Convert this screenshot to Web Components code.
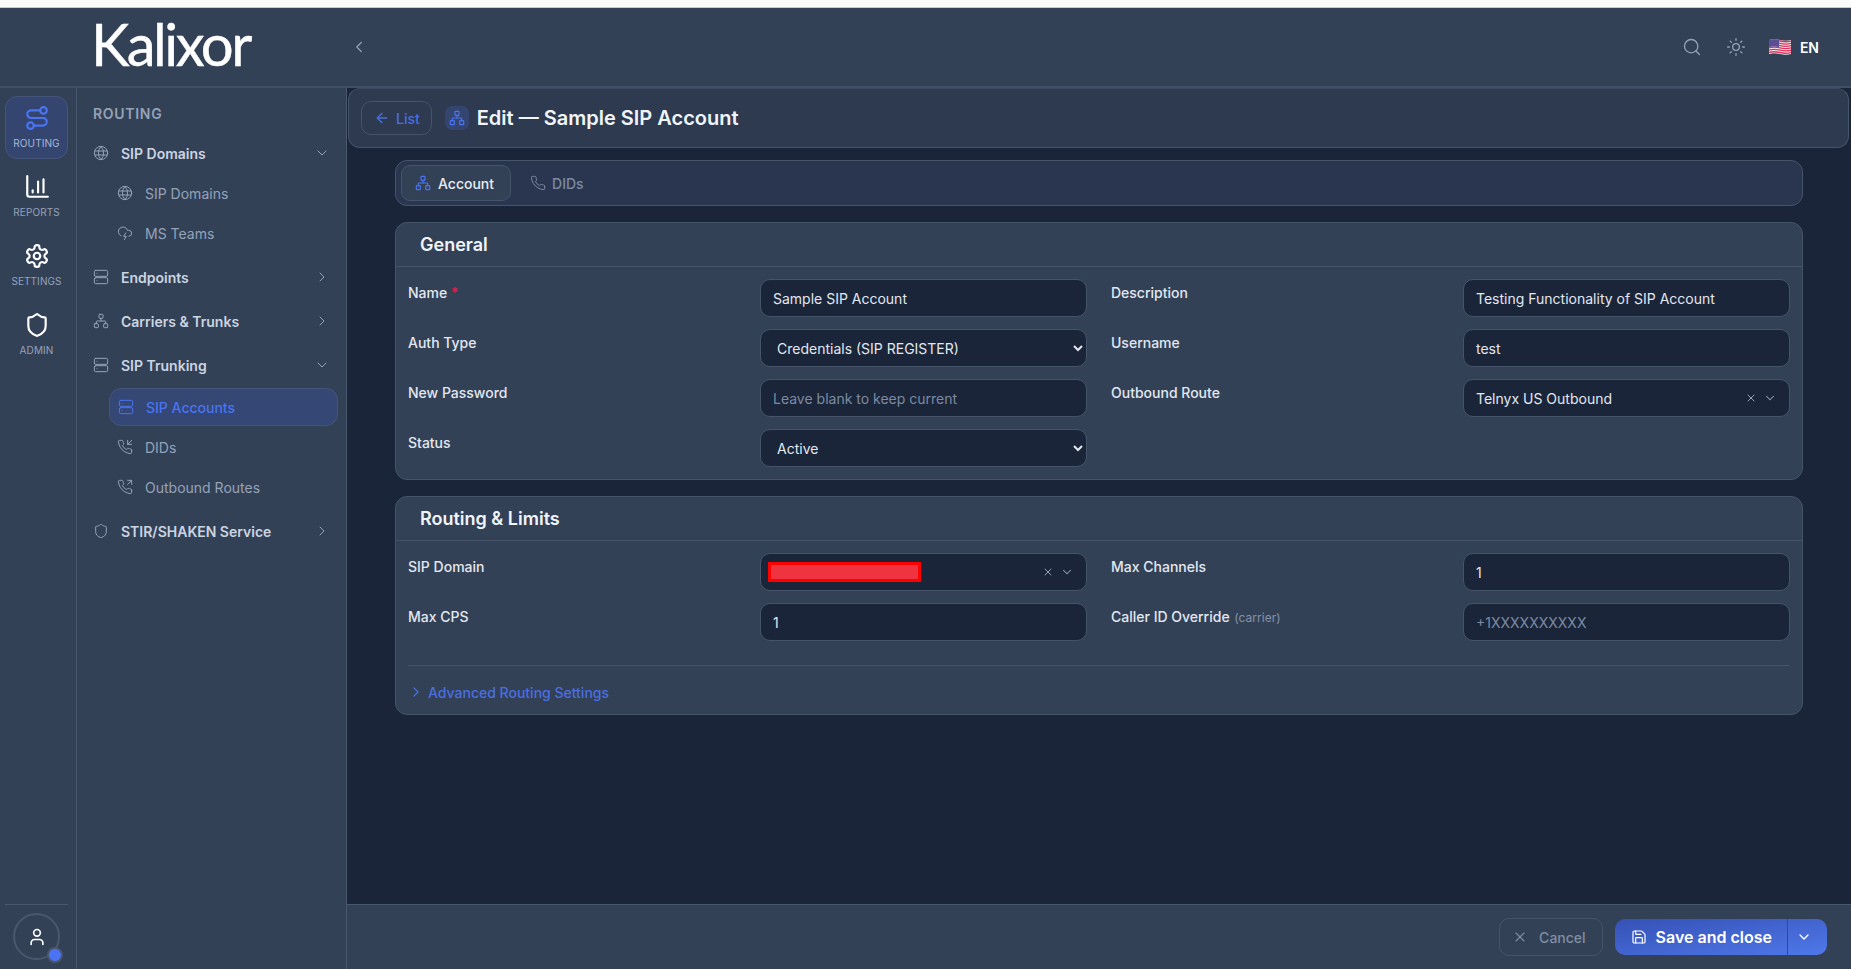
<!DOCTYPE html>
<html lang="en">
<head>
<meta charset="utf-8">
<title>Kalixor</title>
<style>
html,body{margin:0;height:100%;background:#1b2539;overflow:hidden}
body{font-family:Inter,"Liberation Sans",sans-serif;font-size:14px;color:#e2e8f0}
</style>
</head>
<body>
<kx-app>
  <kx-header slot="header"></kx-header>
  <kx-rail slot="rail">
    <kx-rail-item icon="route" active>ROUTING</kx-rail-item>
    <kx-rail-item icon="chart">REPORTS</kx-rail-item>
    <kx-rail-item icon="settings">SETTINGS</kx-rail-item>
    <kx-rail-item icon="shield">ADMIN</kx-rail-item>
  </kx-rail>
  <kx-nav slot="nav" heading="ROUTING">
    <kx-nav-item icon="globe" open>SIP Domains</kx-nav-item>
    <kx-nav-sub icon="globe" style="margin-top:-1px">SIP Domains</kx-nav-sub>
    <kx-nav-sub icon="cloud" style="margin-bottom:3px">MS Teams</kx-nav-sub>
    <kx-nav-item icon="server">Endpoints</kx-nav-item>
    <kx-nav-item icon="network">Carriers &amp; Trunks</kx-nav-item>
    <kx-nav-item icon="server" open>SIP Trunking</kx-nav-item>
    <kx-nav-sub icon="server" active style="margin-top:1px">SIP Accounts</kx-nav-sub>
    <kx-nav-sub icon="phonein">DIDs</kx-nav-sub>
    <kx-nav-sub icon="phoneout" style="margin-bottom:3px">Outbound Routes</kx-nav-sub>
    <kx-nav-item icon="shield">STIR/SHAKEN Service</kx-nav-item>
  </kx-nav>
  <kx-titlebar slot="title">Edit — Sample SIP Account</kx-titlebar>
  <kx-tabs slot="content"></kx-tabs>
  <kx-card slot="content" heading="General">
    <kx-field label="Name" required><kx-input>Sample SIP Account</kx-input></kx-field>
    <kx-field label="Description"><kx-input>Testing Functionality of SIP Account</kx-input></kx-field>
    <kx-field label="Auth Type"><kx-select>Credentials (SIP REGISTER)</kx-select></kx-field>
    <kx-field label="Username"><kx-input>test</kx-input></kx-field>
    <kx-field label="New Password"><kx-input placeholder>Leave blank to keep current</kx-input></kx-field>
    <kx-field label="Outbound Route"><kx-combo>Telnyx US Outbound</kx-combo></kx-field>
    <kx-field label="Status"><kx-select>Active</kx-select></kx-field>
  </kx-card>
  <kx-card slot="content" heading="Routing &amp; Limits" advanced>
    <kx-field label="SIP Domain"><kx-combo redacted></kx-combo></kx-field>
    <kx-field label="Max Channels"><kx-input>1</kx-input></kx-field>
    <kx-field label="Max CPS"><kx-input>1</kx-input></kx-field>
    <kx-field label="Caller ID Override" note="(carrier)"><kx-input placeholder>+1XXXXXXXXXX</kx-input></kx-field>
  </kx-card>
  <kx-footer slot="footer"></kx-footer>
</kx-app>

<script>
const ICONS = {
  route:'<circle cx="6" cy="19" r="3"/><path d="M9 19h8.5a3.5 3.5 0 0 0 0-7h-11a3.5 3.5 0 0 1 0-7H15"/><circle cx="18" cy="5" r="3"/>',
  chart:'<path d="M3 2v17a2 2 0 0 0 2 2h17"/><path d="M8 17v-2"/><path d="M13 17V7"/><path d="M18 17V5"/>',
  settings:'<path d="M12.22 2h-.44a2 2 0 0 0-2 2v.18a2 2 0 0 1-1 1.73l-.43.25a2 2 0 0 1-2 0l-.15-.08a2 2 0 0 0-2.73.73l-.22.38a2 2 0 0 0 .73 2.73l.15.1a2 2 0 0 1 1 1.72v.51a2 2 0 0 1-1 1.74l-.15.09a2 2 0 0 0-.73 2.73l.22.38a2 2 0 0 0 2.73.73l.15-.08a2 2 0 0 1 2 0l.43.25a2 2 0 0 1 1 1.73V20a2 2 0 0 0 2 2h.44a2 2 0 0 0 2-2v-.18a2 2 0 0 1 1-1.73l.43-.25a2 2 0 0 1 2 0l.15.08a2 2 0 0 0 2.73-.73l.22-.39a2 2 0 0 0-.73-2.73l-.15-.08a2 2 0 0 1-1-1.74v-.5a2 2 0 0 1 1-1.74l.15-.09a2 2 0 0 0 .73-2.73l-.22-.38a2 2 0 0 0-2.73-.73l-.15.08a2 2 0 0 1-2 0l-.43-.25a2 2 0 0 1-1-1.73V4a2 2 0 0 0-2-2z"/><circle cx="12" cy="12" r="3"/>',
  shield:'<path d="M20 13c0 5-3.5 7.5-7.66 8.95a1 1 0 0 1-.67-.01C7.5 20.5 4 18 4 13V6a1 1 0 0 1 1-1c2 0 4.5-1.2 6.24-2.72a1.17 1.17 0 0 1 1.52 0C14.51 3.81 17 5 19 5a1 1 0 0 1 1 1z"/>',
  globe:'<circle cx="12" cy="12" r="10"/><path d="M12 2a14.5 14.5 0 0 0 0 20 14.5 14.5 0 0 0 0-20"/><path d="M2.8 9h18.4"/><path d="M2.8 15h18.4"/>',
  cloud:'<path d="M6 16.326A7 7 0 1 1 15.71 8h1.79a4.5 4.5 0 0 1 .5 8.973"/><path d="m13 12-3 5h4l-3 5"/>',
  server:'<rect x="2" y="2" width="20" height="9" rx="2"/><rect x="2" y="13" width="20" height="9" rx="2"/><path d="M6 6.5h.01"/><path d="M6 17.5h.01"/>',
  network:'<rect x="16" y="16" width="6" height="6" rx="1"/><rect x="2" y="16" width="6" height="6" rx="1"/><rect x="9" y="2" width="6" height="6" rx="1"/><path d="M5 16v-3a1 1 0 0 1 1-1h12a1 1 0 0 1 1 1v3"/><path d="M12 12V8"/>',
  phone:'<path d="M22 16.92v3a2 2 0 0 1-2.18 2 19.79 19.79 0 0 1-8.63-3.07 19.5 19.5 0 0 1-6-6 19.79 19.79 0 0 1-3.07-8.67A2 2 0 0 1 4.11 2h3a2 2 0 0 1 2 1.72 12.84 12.84 0 0 0 .7 2.81 2 2 0 0 1-.45 2.11L8.09 9.91a16 16 0 0 0 6 6l1.27-1.27a2 2 0 0 1 2.11-.45 12.84 12.84 0 0 0 2.81.7A2 2 0 0 1 22 16.92z"/>',
  phonein:'<path d="M22 16.92v3a2 2 0 0 1-2.18 2 19.79 19.79 0 0 1-8.63-3.07 19.5 19.5 0 0 1-6-6 19.79 19.79 0 0 1-3.07-8.67A2 2 0 0 1 4.11 2h3a2 2 0 0 1 2 1.72 12.84 12.84 0 0 0 .7 2.81 2 2 0 0 1-.45 2.11L8.09 9.91a16 16 0 0 0 6 6l1.27-1.27a2 2 0 0 1 2.11-.45 12.84 12.84 0 0 0 2.81.7A2 2 0 0 1 22 16.92z"/><path d="M16 2v6h6"/><path d="m22 2-6 6"/>',
  phoneout:'<path d="M22 16.92v3a2 2 0 0 1-2.18 2 19.79 19.79 0 0 1-8.63-3.07 19.5 19.5 0 0 1-6-6 19.79 19.79 0 0 1-3.07-8.67A2 2 0 0 1 4.11 2h3a2 2 0 0 1 2 1.72 12.84 12.84 0 0 0 .7 2.81 2 2 0 0 1-.45 2.11L8.09 9.91a16 16 0 0 0 6 6l1.27-1.27a2 2 0 0 1 2.11-.45 12.84 12.84 0 0 0 2.81.7A2 2 0 0 1 22 16.92z"/><path d="M16 2h6v6"/><path d="m22 2-6 6"/>',
  search:'<circle cx="11" cy="11" r="8"/><path d="m21 21-4.3-4.3"/>',
  sun:'<circle cx="12" cy="12" r="4"/><path d="M12 2v2"/><path d="M12 20v2"/><path d="m4.93 4.93 1.41 1.41"/><path d="m17.66 17.66 1.41 1.41"/><path d="M2 12h2"/><path d="M20 12h2"/><path d="m6.34 17.66-1.41 1.41"/><path d="m19.07 4.93-1.41 1.41"/>',
  left:'<path d="m15 18-6-6 6-6"/>',
  right:'<path d="m9 18 6-6-6-6"/>',
  down:'<path d="m6 9 6 6 6-6"/>',
  back:'<path d="m12 19-7-7 7-7"/><path d="M19 12H5"/>',
  x:'<path d="M18 6 6 18"/><path d="m6 6 12 12"/>',
  user:'<path d="M19 21v-2a4 4 0 0 0-4-4H9a4 4 0 0 0-4 4v2"/><circle cx="12" cy="7" r="4"/>',
  save:'<path d="M15.2 3a2 2 0 0 1 1.4.6l3.8 3.8a2 2 0 0 1 .6 1.4V19a2 2 0 0 1-2 2H5a2 2 0 0 1-2-2V5a2 2 0 0 1 2-2z"/><path d="M17 21v-7a1 1 0 0 0-1-1H8a1 1 0 0 0-1 1v7"/><path d="M7 3v4a1 1 0 0 0 1 1h7"/>'
};
function el(name, html){
  customElements.define(name, class extends HTMLElement{
    constructor(){super();this.attachShadow({mode:'open'});}
    connectedCallback(){this.shadowRoot.innerHTML = html(this);}
  });
}
customElements.define('kx-icon', class extends HTMLElement{
  constructor(){super();this.attachShadow({mode:'open'});}
  connectedCallback(){
    const s=this.getAttribute('size')||16, w=this.getAttribute('stroke')||2;
    this.shadowRoot.innerHTML=`<style>:host{display:inline-flex;flex:none;width:${s}px;height:${s}px}svg{display:block}</style>
    <svg xmlns="http://www.w3.org/2000/svg" width="${s}" height="${s}" viewBox="0 0 24 24" fill="none" stroke="currentColor" stroke-width="${w}" stroke-linecap="round" stroke-linejoin="round">${ICONS[this.getAttribute('name')]}</svg>`;
  }
});

el('kx-app',()=>`<style>
:host{display:grid;height:100vh;grid-template-columns:77px 270px 1fr;grid-template-rows:8px 80px 1fr 65px;overflow:hidden;
  grid-template-areas:"strip strip strip" "head head head" "rail nav main" "rail nav foot"}
.strip{grid-area:strip;background:#fafafa;border-bottom:1px solid #c9c9c9;box-sizing:border-box}
.head{grid-area:head;display:grid}
.rail{grid-area:rail;display:grid}
.nav{grid-area:nav;display:grid}
.main{grid-area:main;display:flex;flex-direction:column;min-height:0}
.title{display:block;margin:0 2px 0 1px}
.content{display:flex;flex-direction:column;gap:16px;padding:12px 48px 0 48px}
.foot{grid-area:foot;display:grid}
</style>
<div class="strip"></div>
<div class="head"><slot name="header"></slot></div>
<div class="rail"><slot name="rail"></slot></div>
<div class="nav"><slot name="nav"></slot></div>
<div class="main"><div class="title"><slot name="title"></slot></div><div class="content"><slot name="content"></slot></div></div>
<div class="foot"><slot name="footer"></slot></div>`);

el('kx-header',()=>`<style>
:host{display:flex;align-items:center;background:#334157;border-bottom:2px solid #414f66;box-sizing:border-box;height:80px;padding:0 32px 0 91px;color:#94a3b8}
.logo{font:400 58px/1 Lato,Inter,sans-serif;color:#fff;letter-spacing:-2.5px;width:259px;margin-top:-7px;-webkit-text-stroke:.4px #fff}
.col{display:flex}
.spacer{flex:1}
.right{display:flex;align-items:center}
.sun{margin-left:24px}
.flag{margin-left:23px;display:block}
.en{margin-left:9px;color:#fff;font-weight:600;font-size:14px}
</style>
<div class="logo">Kalixor</div>
<div class="col"><kx-icon name="left" size="18" stroke="1.6"></kx-icon></div>
<div class="spacer"></div>
<div class="right">
<kx-icon name="search" size="20" stroke="1.6"></kx-icon>
<kx-icon class="sun" name="sun" size="20" stroke="1.6"></kx-icon>
<svg class="flag" width="22" height="16" viewBox="0 0 22 16">
<path d="M0 1Q5 -.5 11 1T22 1V15Q17 16.500 11 15T0 15Z" fill="#f2f2f4"/>
<g fill="none" stroke="#e0315a" stroke-width="1.300"><path d="M0 2Q5 .5 11 2T22 2"/><path d="M0 4.300Q5 2.800 11 4.300T22 4.300"/><path d="M0 6.600Q5 5.100 11 6.600T22 6.600"/><path d="M0 8.900Q5 7.400 11 8.900T22 8.900"/><path d="M0 11.200Q5 9.700 11 11.200T22 11.200"/><path d="M0 13.500Q5 12 11 13.500T22 13.500"/></g>
<path d="M0 1Q5 -.3 10 .8V8Q5 7 0 8Z" fill="#5b4d96"/>
</svg>
<span class="en">EN</span>
</div>`);

el('kx-rail',()=>`<style>
:host{display:flex;flex-direction:column;background:#334157;border-right:1px solid #4a586e;box-sizing:border-box;padding:8px 8px 0 5px}
.list{display:flex;flex-direction:column;gap:6px;flex:1}
.bottom{border-top:1px solid #4a586e;height:65px;display:flex;justify-content:center;padding-top:8px;box-sizing:border-box}
.avatar{position:relative;width:47px;height:47px;box-sizing:border-box;border:2px solid #4a586e;border-radius:50%;display:flex;align-items:center;justify-content:center;color:#fff}
.dot{position:absolute;right:-5px;bottom:-5px;width:12px;height:12px;border-radius:50%;background:#4a74f5;border:2px solid #4a586e}
</style>
<div class="list"><slot></slot></div>
<div class="bottom"><div class="avatar"><kx-icon name="user" size="20" stroke="2"></kx-icon><div class="dot"></div></div></div>`);

el('kx-rail-item',h=>`<style>
:host{display:flex;flex-direction:column;align-items:center;box-sizing:border-box;height:63px;padding-top:8px;gap:5px;border-radius:12px;border:1px solid transparent;font-size:10px;line-height:14px;color:#94a3b8;letter-spacing:.1px}
:host([active]){background:#344570;border-color:#45557a;color:#a9b8d6}
kx-icon{color:#fff}
:host([active]) kx-icon{color:#4a74f0}
</style><kx-icon name="${h.getAttribute('icon')}" size="26" stroke="2"></kx-icon><slot></slot>`);

el('kx-nav',h=>`<style>
:host{display:flex;flex-direction:column;background:#334157;border-right:1px solid #4a586e;box-sizing:border-box;padding:0 8px 0 16px}
h2{margin:0;padding:16px 0 0;height:43px;box-sizing:border-box;font-size:14px;line-height:20px;font-weight:600;letter-spacing:.7px;color:#94a3b8}
</style><h2>${h.getAttribute('heading')}</h2><slot></slot>`);

el('kx-nav-item',h=>`<style>
:host{display:flex;align-items:center;height:44px;font-weight:600;font-size:14px;color:#cbd5e1}
.i{color:#94a3b8}
.t{margin-left:12px;flex:1}
.c{color:#94a3b8;margin-right:8px}
</style><kx-icon class="i" name="${h.getAttribute('icon')}" size="16" stroke="1.500"></kx-icon><span class="t"><slot></slot></span><kx-icon class="c" name="${h.hasAttribute('open')?'down':'right'}" size="16" stroke="1.500"></kx-icon>`);

el('kx-nav-sub',h=>`<style>
:host{display:flex;align-items:center;height:38px;margin:0 0 2px 16px;padding-left:7px;box-sizing:border-box;border:1px solid transparent;border-radius:12px;font-size:14px;font-weight:400;color:#94a3b8}
:host([active]){background:#344775;border-color:#45557a;color:#4a74f0;font-weight:500;padding-left:8px}
.t{margin-left:12px}
</style><kx-icon name="${h.getAttribute('icon')}" size="16" stroke="1.500"></kx-icon><span class="t"><slot></slot></span>`);

el('kx-titlebar',()=>`<style>
:host{display:flex;align-items:center;height:60px;box-sizing:border-box;background:#2d3a50;border:1px solid #46546a;border-top-color:#3d4b62;border-radius:12px;padding:0 12px}
.back{display:flex;align-items:center;gap:6px;height:34px;box-sizing:border-box;padding:0 11px 0 12px;border:1px solid #46546a;border-radius:10px;color:#4a6fe0;font-weight:500;font-size:14px}
.tile{width:24px;height:24px;margin-left:13px;border-radius:7px;background:#344570;display:flex;align-items:center;justify-content:center;color:#4a74f0}
.t{margin-left:8px;font-size:20px;font-weight:600;color:#f1f5f9}
</style>
<div class="back"><kx-icon name="back" size="16"></kx-icon>List</div>
<div class="tile"><kx-icon name="network" size="16" stroke="1.800"></kx-icon></div>
<div class="t"><slot></slot></div>`);

el('kx-tabs',()=>`<style>
:host{display:flex;align-items:center;height:46px;box-sizing:border-box;background:#2a3650;border:1px solid #46546a;border-radius:12px;padding:0 5px;font-size:14px;font-weight:500}
.tab{display:flex;align-items:center;gap:6px;height:36px;box-sizing:border-box;padding:0 14px;border:1px solid transparent;border-radius:9px;color:#7b8aa2}
.on{background:#334157;border-color:#46546a;color:#e8eef6;padding:0 16px 0 13px;gap:7px}
.on kx-icon{color:#4a74f0}
.off{margin-left:4px}
</style>
<div class="tab on"><kx-icon name="network" size="16" stroke="1.800"></kx-icon>Account</div>
<div class="tab off"><kx-icon name="phone" size="16" stroke="1.500"></kx-icon>DIDs</div>`);

el('kx-card',h=>`<style>
:host{display:block;background:#334157;border:1px solid #46546a;border-radius:12px;box-sizing:border-box}
h3{margin:0;height:44px;box-sizing:border-box;display:flex;align-items:center;padding:0 24px;border-bottom:1px solid #46546a;font-size:18px;font-weight:600;color:#f1f5f9}
.grid{display:grid;grid-template-columns:1fr 1fr;column-gap:24px;row-gap:12px;padding:12px 12px 12px}
.adv{margin:12px 12px 0;border-top:1px solid #46546a;height:49px;box-sizing:border-box;display:flex;align-items:center;gap:4px;padding:4px 0 0 0;color:#4a6fe0;font-weight:500;font-size:14px}
</style>
<h3>${h.getAttribute('heading').replace('&','&amp;')}</h3>
<div class="grid"><slot></slot></div>
${h.hasAttribute('advanced')?'<div class="adv"><kx-icon name="right" size="16" stroke="1.800"></kx-icon>Advanced Routing Settings</div>':''}`);

el('kx-field',h=>`<style>
:host{display:grid;grid-template-columns:352px 1fr;align-items:start;min-height:38px}
label{font-size:14px;font-weight:500;line-height:20px;padding-top:4px;color:#e2e8f0}
.req{color:#e11d48}
.note{font-size:12px;font-weight:400;color:#8492a8;margin-left:1px}
</style>
<label>${h.getAttribute('label')}${h.hasAttribute('required')?' <span class="req">*</span>':''}${h.hasAttribute('note')?` <span class="note">${h.getAttribute('note')}</span>`:''}</label>
<div><slot></slot></div>`);

const boxCss=`display:flex;align-items:center;height:38px;box-sizing:border-box;background:#1b2539;border:1px solid #46546a;border-radius:10px;padding:0 12px;font-size:14px;color:#e2e8f0;`;

el('kx-input',()=>`<style>
:host{${boxCss}}
:host([placeholder]){color:#7b8aa2}
</style><slot></slot>`);

el('kx-select',h=>`<style>
:host{display:block}
select{display:block;width:100%;height:38px;box-sizing:border-box;background:#1b2539;border:1px solid #46546a;border-radius:10px;padding:0 4px 0 12px;font:400 14px Inter,sans-serif;color:#e2e8f0;color-scheme:dark;outline:none}
</style><select><option>${h.textContent}</option></select>`);

el('kx-combo',h=>`<style>
:host{${boxCss}padding-right:12px;gap:0}
.v{flex:1;display:flex;align-items:center}
.c{color:#94a3b8}
.x{margin-right:6px}
.red{width:153px;height:20px;box-sizing:border-box;margin-left:-5px;background:#ef3340;border:3px solid #ff0000}
</style>
<div class="v">${h.hasAttribute('redacted')?'<div class="red"></div>':'<slot></slot>'}</div>
<kx-icon class="c x" name="x" size="12" stroke="2"></kx-icon><kx-icon class="c" name="down" size="14" stroke="1.800"></kx-icon>`);

el('kx-footer',()=>`<style>
:host{display:flex;align-items:center;justify-content:flex-end;gap:12px;height:65px;box-sizing:border-box;background:#334157;border-top:1px solid #4a586e;padding:0 24px 0 0}
.cancel{display:flex;align-items:center;gap:11px;height:38px;box-sizing:border-box;padding:0 16px 0 12px;border:1px solid #46546a;border-radius:10px;color:#7f8da3;font-size:14px;font-weight:500}
.group{display:flex;height:36px;border-radius:10px;overflow:hidden;background:linear-gradient(170deg,#3551b5,#4f78ea);color:#fff}
.save{display:flex;align-items:center;gap:9px;padding:0 15px 0 16px;font-size:16px;font-weight:600;border-right:1px solid #2f4a9c}
.more{display:flex;align-items:center;width:39px;box-sizing:border-box;padding-left:8px}
</style>
<div class="cancel"><kx-icon name="x" size="16" stroke="1.600"></kx-icon>Cancel</div>
<div class="group"><div class="save"><kx-icon name="save" size="16" stroke="1.800"></kx-icon>Save and close</div><div class="more"><kx-icon name="down" size="16" stroke="2"></kx-icon></div></div>`);
</script>
</body>
</html>
